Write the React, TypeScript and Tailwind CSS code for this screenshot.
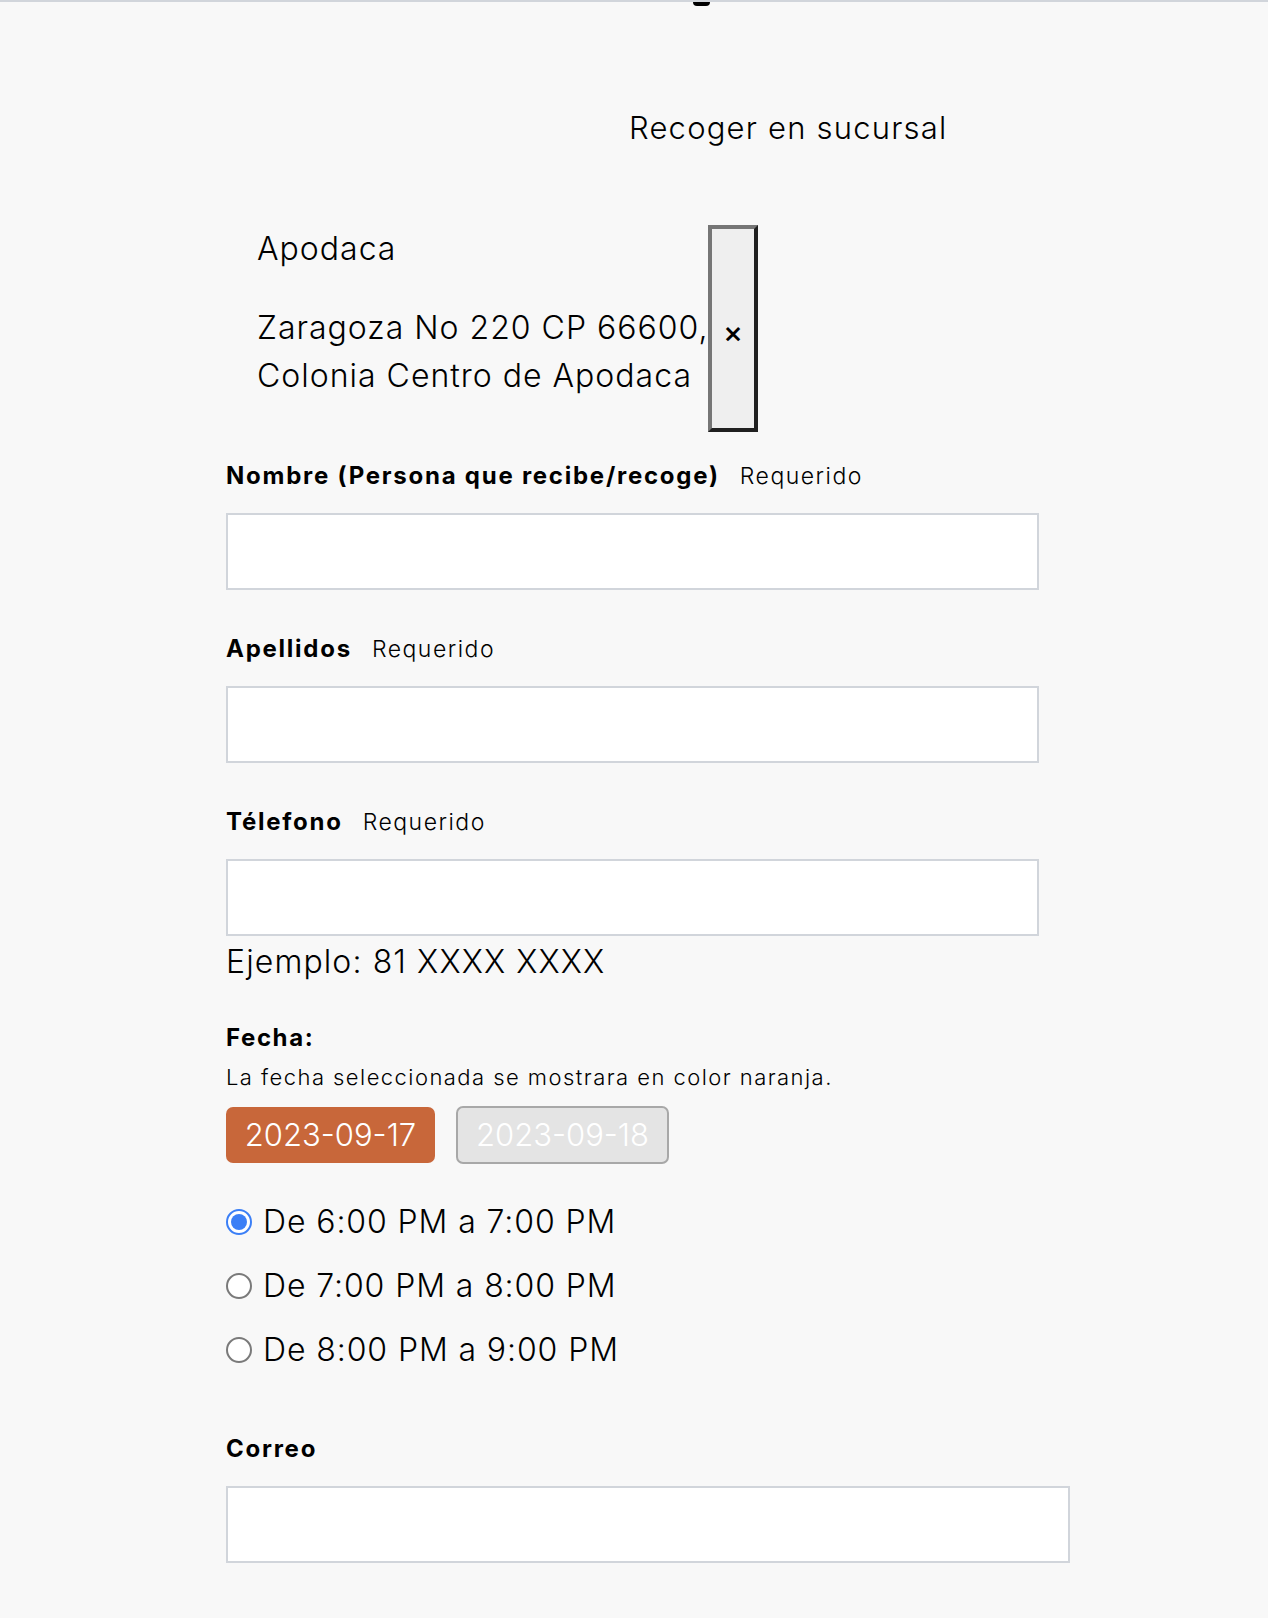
import { useState } from "react";

const font = { fontFamily: "Inter, 'Noto Sans', sans-serif" };

function Field({ label, required, wide }: { label: string; required?: boolean; wide?: boolean }) {
  return (
    <div className="flex flex-col">
      <div className="flex h-[30px] items-center gap-[20px]">
        <span className="text-[24px] font-bold tracking-[1.75px] text-black">{label}</span>
        {required && <span className="text-[23px] font-light tracking-[1.5px] text-black">Requerido</span>}
      </div>
      <input
        type="text"
        className={`mt-[22px] h-[77px] border-2 border-[#d1d5db] bg-white px-3 outline-none ${wide ? "w-[844px]" : "w-[813px]"}`}
      />
    </div>
  );
}

function Radio({ checked, label, onClick }: { checked: boolean; label: string; onClick: () => void }) {
  return (
    <label onClick={onClick} className="flex h-[64px] cursor-pointer items-center gap-[11px]">
      {checked ? (
        <span className="flex h-[26px] w-[26px] items-center justify-center rounded-full border-2 border-[#3b7ff6] bg-white">
          <span className="h-[16px] w-[16px] rounded-full bg-[#3b7ff6]" />
        </span>
      ) : (
        <span className="h-[26px] w-[26px] rounded-full border-2 border-[#7a7a7a] bg-white" />
      )}
      <span className="text-[32px] font-light tracking-[0.9px] text-black">{label}</span>
    </label>
  );
}

export default function App() {
  const [slot, setSlot] = useState(0);
  const slots = ["De 6:00 PM a 7:00 PM", "De 7:00 PM a 8:00 PM", "De 8:00 PM a 9:00 PM"];

  return (
    <div style={font} className="min-h-screen border-t-2 border-[#d1d5db] bg-[#f8f8f8] text-black">
      <div className="relative">
        <span className="absolute left-[693px] top-0 h-[4px] w-[17px] rounded-b-full bg-black" />
      </div>

      <h2 className="pl-[629px] pt-[108px] text-[31px] font-light leading-[36px] tracking-[1.2px]">Recoger en sucursal</h2>

      <div className="mt-[79px] flex pl-[257px]">
        <div className="w-[451px] whitespace-nowrap pt-[4px] text-[32px] font-light tracking-[1px]">
          <p className="leading-[40px]">Apodaca</p>
          <p className="mt-[35px] leading-[48px]">
            Zaragoza No 220 CP 66600,
            <br />
            Colonia Centro de Apodaca
          </p>
        </div>
        <button
          type="button"
          className="flex h-[207px] w-[50px] items-center justify-center border-4 border-t-[#767676] border-l-[#767676] border-r-[#202020] border-b-[#202020] bg-[#efefef] pt-[8px] text-[30px] font-medium"
        >
          ×
        </button>
      </div>

      <div className="flex flex-col pl-[226px] pt-[29px]">
        <Field label="Nombre (Persona que recibe/recoge)" required />
        <div className="mt-[44px]">
          <Field label="Apellidos" required />
        </div>
        <div className="mt-[44px]">
          <Field label="Télefono" required />
        </div>
        <p className="text-[32px] font-light leading-[52px] tracking-[1.1px]">Ejemplo: 81 XXXX XXXX</p>

        <p className="mt-[35px] text-[24px] font-bold leading-[30px] tracking-[1.6px]">Fecha:</p>
        <p className="mt-[9px] text-[22px] font-light leading-[30px] tracking-[1.45px]">
          La fecha seleccionada se mostrara en color naranja.
        </p>
        <div className="mt-[14px] flex items-center gap-[21px]">
          <button type="button" className="h-[56px] w-[209px] rounded-[7px] bg-[#c8673a] text-[31px] font-light text-white">
            2023-09-17
          </button>
          <button type="button" className="h-[58px] w-[213px] rounded-[7px] border-2 border-[#a8a8a8] bg-[#e4e4e4] text-[31px] font-light text-white">
            2023-09-18
          </button>
        </div>

        <div className="mt-[26px] flex flex-col">
          {slots.map((s, i) => (
            <Radio key={s} label={s} checked={slot === i} onClick={() => setSlot(i)} />
          ))}
        </div>

        <div className="mt-[52px]">
          <Field label="Correo" wide />
        </div>
      </div>
    </div>
  );
}
